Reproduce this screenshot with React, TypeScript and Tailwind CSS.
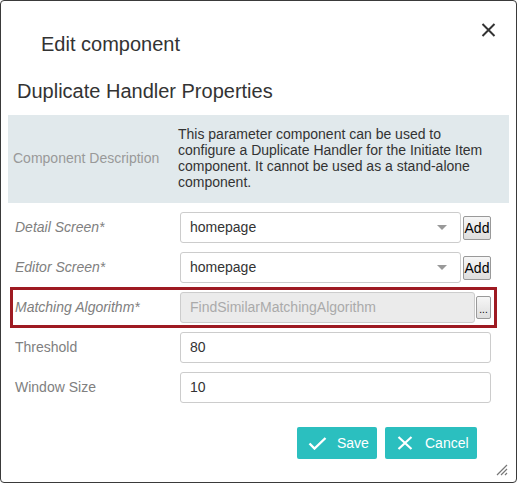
import React from 'react'

const font = { fontFamily: '"Liberation Sans", Arial, sans-serif' }

function Caret() {
  return (
    <svg width="10" height="6" viewBox="0 0 10 6" className="shrink-0">
      <path d="M0 0 L10 0 L5 5 Z" fill="#999" />
    </svg>
  )
}

function SelectRow({ label, value }: { label: string, value: string }) {
  return (
    <div className="flex h-[31px] items-center">
      <div className="w-[165px] shrink-0 text-[14px] italic text-[#808080]">{label}</div>
      <div className="flex h-[31px] w-[281px] items-center justify-between rounded-[3px] border border-[#ccc] pl-[9px] pr-[13px] text-[14px] text-[#333]">
        <span>{value}</span>
        <Caret />
      </div>
      <button className="ml-[2px] flex h-[24px] w-[28px] items-center justify-center rounded-[2px] border border-[#999] bg-gradient-to-b from-[#f6f6f6] to-[#dedede] text-[14px] leading-none text-black">
        Add
      </button>
    </div>
  )
}

function TextRow({ label, value }: { label: string, value: string }) {
  return (
    <div className="flex h-[31px] items-center">
      <div className="w-[165px] shrink-0 text-[14px] text-[#808080]">{label}</div>
      <div className="flex h-[31px] w-[311px] items-center rounded-[3px] border border-[#ccc] pl-[9px] text-[14px] text-[#333]">
        {value}
      </div>
    </div>
  )
}

export default function App() {
  return (
    <div style={font} className="relative h-[483px] w-[517px] rounded-[4px] border border-[#3a3a3a] bg-white">
      <div className="flex items-start justify-between pl-[40px] pr-[20px] pt-[15px]">
        <h2 className="mt-[14px] text-[20px] leading-[28px] text-[#333]">Edit component</h2>
        <button className="mt-[1px] flex h-[26px] w-[16px] items-center justify-center">
          <svg width="15" height="14" viewBox="0 0 15 14">
            <path d="M1.5 1 L13.5 13 M13.5 1 L1.5 13" stroke="#333" strokeWidth="2" />
          </svg>
        </button>
      </div>

      <h3 className="ml-[16px] mt-[19px] text-[20px] leading-[28px] text-[#333]">Duplicate Handler Properties</h3>

      <div className="mx-[7px] mt-[10px] flex h-[88px] items-center bg-[#e1e9ec]">
        <div className="w-[170px] shrink-0 pb-[2px] pl-[5px] text-[14px] text-[#999]">Component Description</div>
        <div className="w-[318px] pb-[2px] text-[14px] leading-[16px] text-[#333]">
          This parameter component can be used to configure a Duplicate Handler for the Initiate Item component. It cannot be used as a stand-alone component.
        </div>
      </div>

      <div className="mt-[9px] flex w-[491px] flex-col gap-[9px] pl-[14px]">
        <SelectRow label="Detail Screen*" value="homepage" />
        <SelectRow label="Editor Screen*" value="homepage" />
        <div className="flex h-[31px] items-center outline-[3px] outline-offset-[2px] outline-[#9e1a22] outline-solid">
          <div className="w-[165px] shrink-0 text-[14px] italic text-[#808080]">Matching Algorithm*</div>
          <div className="flex h-[31px] w-[295px] items-center rounded-[3px] border border-[#ccc] bg-[#ebebeb] pl-[9px] text-[14px] text-[#aaa]">
            FindSimilarMatchingAlgorithm
          </div>
          <button className="ml-[1px] flex h-[23px] w-[15px] items-end justify-center rounded-[2px] border border-[#999] bg-gradient-to-b from-[#f6f6f6] to-[#dedede] pb-[3px] text-[10px] leading-none text-black">
            ...
          </button>
        </div>
        <TextRow label="Threshold" value="80" />
        <TextRow label="Window Size" value="10" />
      </div>

      <div className="mr-[39px] mt-[24px] flex justify-end gap-[8px]">
        <button className="flex h-[32px] w-[80px] items-center gap-[10px] rounded-[2px] bg-[#2bbfbf] pl-[11px] text-[14px] text-white">
          <svg width="19" height="13" viewBox="0 0 19 13">
            <path d="M1.5 6.5 L6.5 11.5 L17.5 1" stroke="white" strokeWidth="2.4" fill="none" />
          </svg>
          Save
        </button>
        <button className="flex h-[32px] w-[92px] items-center gap-[12px] rounded-[2px] bg-[#2bbfbf] pl-[12px] text-[14px] text-white">
          <svg width="16" height="14" viewBox="0 0 16 14">
            <path d="M1.5 1 L14.5 13 M14.5 1 L1.5 13" stroke="white" strokeWidth="2.2" />
          </svg>
          Cancel
        </button>
      </div>

      <svg width="12" height="12" viewBox="0 0 12 12" className="absolute bottom-[6px] right-[8px]">
        <path d="M1 11 L11 1 M5 11 L11 5 M9 11 L11 9" stroke="#777" strokeWidth="1.2" />
      </svg>
    </div>
  )
}
